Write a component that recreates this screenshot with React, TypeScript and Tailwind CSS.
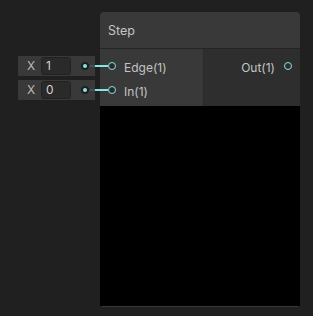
import React from 'react';

type Slot = { name: string; value: string };

const INPUTS: Slot[] = [
  { name: 'Edge(1)', value: '1' },
  { name: 'In(1)', value: '0' },
];

// inline value field docked to the left of an input port
const InlineField: React.FC<{ value: string; top: number }> = ({ value, top }) => (
  <div className="absolute left-[18px] flex h-[20px] w-[77px] items-center bg-[#393939]" style={{ top }}>
    <span className="ml-[9px] w-[14px] text-[12px] text-[#b8b8b8]">X</span>
    <div className="flex h-[18px] w-[30px] items-center rounded-[3px] border border-[#212121] bg-[#2a2a2a] pl-[4px] text-[12px] text-[#d2d2d2]">
      {value}
    </div>
    <div className="ml-[10px] flex h-[8px] w-[8px] items-center justify-center rounded-full bg-[#1f1f1f]">
      <div className="h-[4px] w-[4px] rounded-full bg-[#84e4e7]" />
    </div>
    <div className="ml-[1px] h-[2px] w-[5px] bg-[#3d5556]" />
  </div>
);

const Port: React.FC<{ label: string; right?: boolean }> = ({ label, right }) => (
  <div className={`flex h-[24px] items-center ${right ? 'justify-end pr-[8px]' : 'pl-[8px]'}`}>
    {right ? (
      <>
        <span className="mt-[4px] text-[12px] text-[#c4c4c4]">{label}</span>
        <div className="ml-[9px] h-[8px] w-[8px] rounded-full border-[1.5px] border-[#84e4e7]" />
      </>
    ) : (
      <>
        <div className="h-[8px] w-[8px] rounded-full border-[1.5px] border-[#84e4e7] bg-[#2a2a2a]" />
        <span className="ml-[8px] mt-[4px] text-[12px] text-[#c4c4c4]">{label}</span>
      </>
    )}
  </div>
);

const App: React.FC = () => {
  return (
    <div className="relative h-[316px] w-[313px] overflow-hidden bg-[#202020] font-['Inter',sans-serif]">
      {INPUTS.map((s, i) => (
        <InlineField key={s.name} value={s.value} top={56 + i * 24} />
      ))}

      <div className="absolute left-[100px] top-[12px] flex h-[295px] w-[200px] flex-col overflow-hidden rounded-[3px] bg-black">
        <div className="flex h-[37px] items-center border-b border-[#252525] bg-[#393939] pl-[8px] pt-[2px] text-[12.5px] text-[#c4c4c4]">
          Step
        </div>
        <div className="flex h-[57px]">
          <div className="w-[104px] border-r border-[#2a2a2a] bg-[#393939] pt-[5px]">
            {INPUTS.map(s => (
              <Port key={s.name} label={s.name} />
            ))}
          </div>
          <div className="flex-1 bg-[#2e2e2e] pt-[5px]">
            <Port label="Out(1)" right />
          </div>
        </div>
        <div className="flex-1 border-b border-[#3a3a3a] bg-black" />
      </div>

      {/* wires into the node, drawn over it */}
      {INPUTS.map((s, i) => (
        <div
          key={s.name + '-wire'}
          className="absolute left-[95px] z-10 h-[2px] w-[13px] bg-[#84e4e7]"
          style={{ top: 65 + i * 24 }}
        />
      ))}
    </div>
  );
};

export default App;
